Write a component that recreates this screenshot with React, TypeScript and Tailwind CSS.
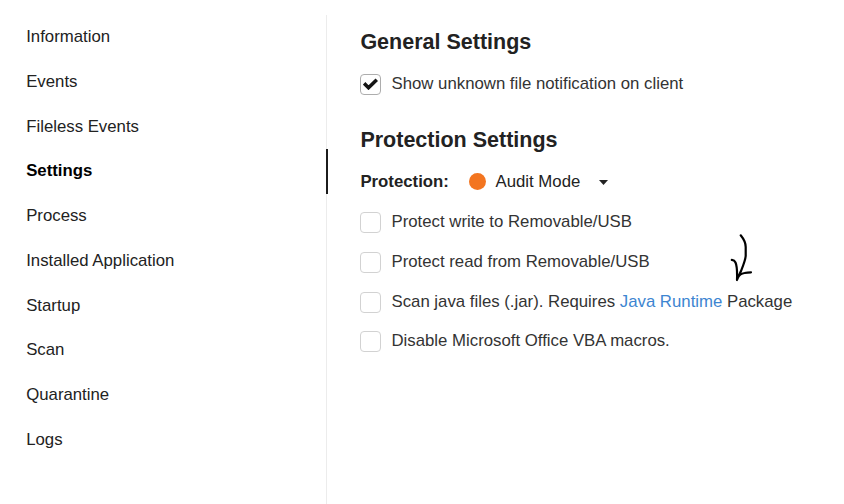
import type { ReactNode } from "react";

const navItems = [
  "Information",
  "Events",
  "Fileless Events",
  "Settings",
  "Process",
  "Installed Application",
  "Startup",
  "Scan",
  "Quarantine",
  "Logs",
];

function Checkbox({ checked = false }: { checked?: boolean }) {
  return (
    <span
      className={
        "flex size-[21px] shrink-0 items-center justify-center rounded-[4px] border bg-white " +
        (checked ? "border-[#adadad]" : "border-[#d2d2d2]")
      }
    >
      {checked && (
        <svg className="mb-px shrink-0" width="15" height="12" viewBox="0 0 15 12" fill="none">
          <path d="M1.1 5.4 5.5 9.7 13.8 1.7" stroke="#151515" strokeWidth="3.6" />
        </svg>
      )}
    </span>
  );
}

function Option({ checked, children }: { checked?: boolean; children: ReactNode }) {
  return (
    <label className="flex h-[21px] gap-[10.5px]">
      <Checkbox checked={checked} />
      <span className="h-[19px] leading-[19px] whitespace-nowrap">{children}</span>
    </label>
  );
}

export default function App() {
  return (
    <div className="flex h-[504px] w-[844px] overflow-hidden bg-white pt-[15px] font-['Liberation_Sans',Arial,sans-serif] text-[16.77px] text-[#222]">
      <nav className="-mr-px flex w-[327px] shrink-0 flex-col border-r border-[#ececec]">
        {navItems.map((item) => (
          <a
            key={item}
            className={
              "-mr-[2px] flex h-[44.77px] shrink-0 items-center pb-[1.65px] pl-[26.2px] " +
              (item === "Settings" ? "border-r-2 border-[#1c1c1c] font-bold text-black" : "")
            }
          >
            {item}
          </a>
        ))}
      </nav>
      <main className="relative pl-[34px]">
        <h2 className="mt-[14px] h-[27px] pl-[0.4px] text-[21.5px] leading-[27px] font-bold">General Settings</h2>
        <div className="mt-[18px] text-[#333]">
          <Option checked>Show unknown file notification on client</Option>
        </div>
        <h2 className="mt-[32px] h-[27px] pl-[0.4px] text-[21.5px] leading-[27px] font-bold">Protection Settings</h2>
        <div className="mt-[17px] flex h-5 items-center">
          <span className="w-[109px] pt-[2px] pl-[0.4px] font-bold">Protection:</span>
          <span className="mr-[9.5px] size-[17px] rounded-full bg-[#f37520]" />
          <span className="pt-[2px]">Audit Mode</span>
          <svg className="mt-[2px] ml-[19px]" width="9" height="5" viewBox="0 0 9 5">
            <path d="M0 0H9L4.5 5Z" fill="#222" />
          </svg>
        </div>
        <div className="mt-[21px] flex flex-col gap-[18.8px] text-[#333]">
          <Option>Protect write to Removable/USB</Option>
          <Option>Protect read from Removable/USB</Option>
          <Option>
            Scan java files (.jar). Requires <a className="text-[#3d85d1]">Java Runtime</a> Package
          </Option>
          <Option>Disable Microsoft Office VBA macros.</Option>
        </div>
        <svg
          className="absolute top-[210px] left-[394px]"
          width="40"
          height="65"
          viewBox="0 0 40 65"
          fill="none"
          stroke="#000"
          strokeWidth="2.2"
          strokeLinecap="round"
          strokeLinejoin="round"
        >
          <path d="M20.7 10.3C23.3 13.5 25.7 17.5 25.7 22V31C25.3 35.5 23 41 21 46C19.3 50 18 52 17 55C17.2 48 17.5 42 15.5 37.5Q14.5 35.2 11.8 34.9M18 52.5C19.5 49.5 21.5 48.5 24.5 48Q27.5 47.3 31 47.3" />
        </svg>
      </main>
    </div>
  );
}
